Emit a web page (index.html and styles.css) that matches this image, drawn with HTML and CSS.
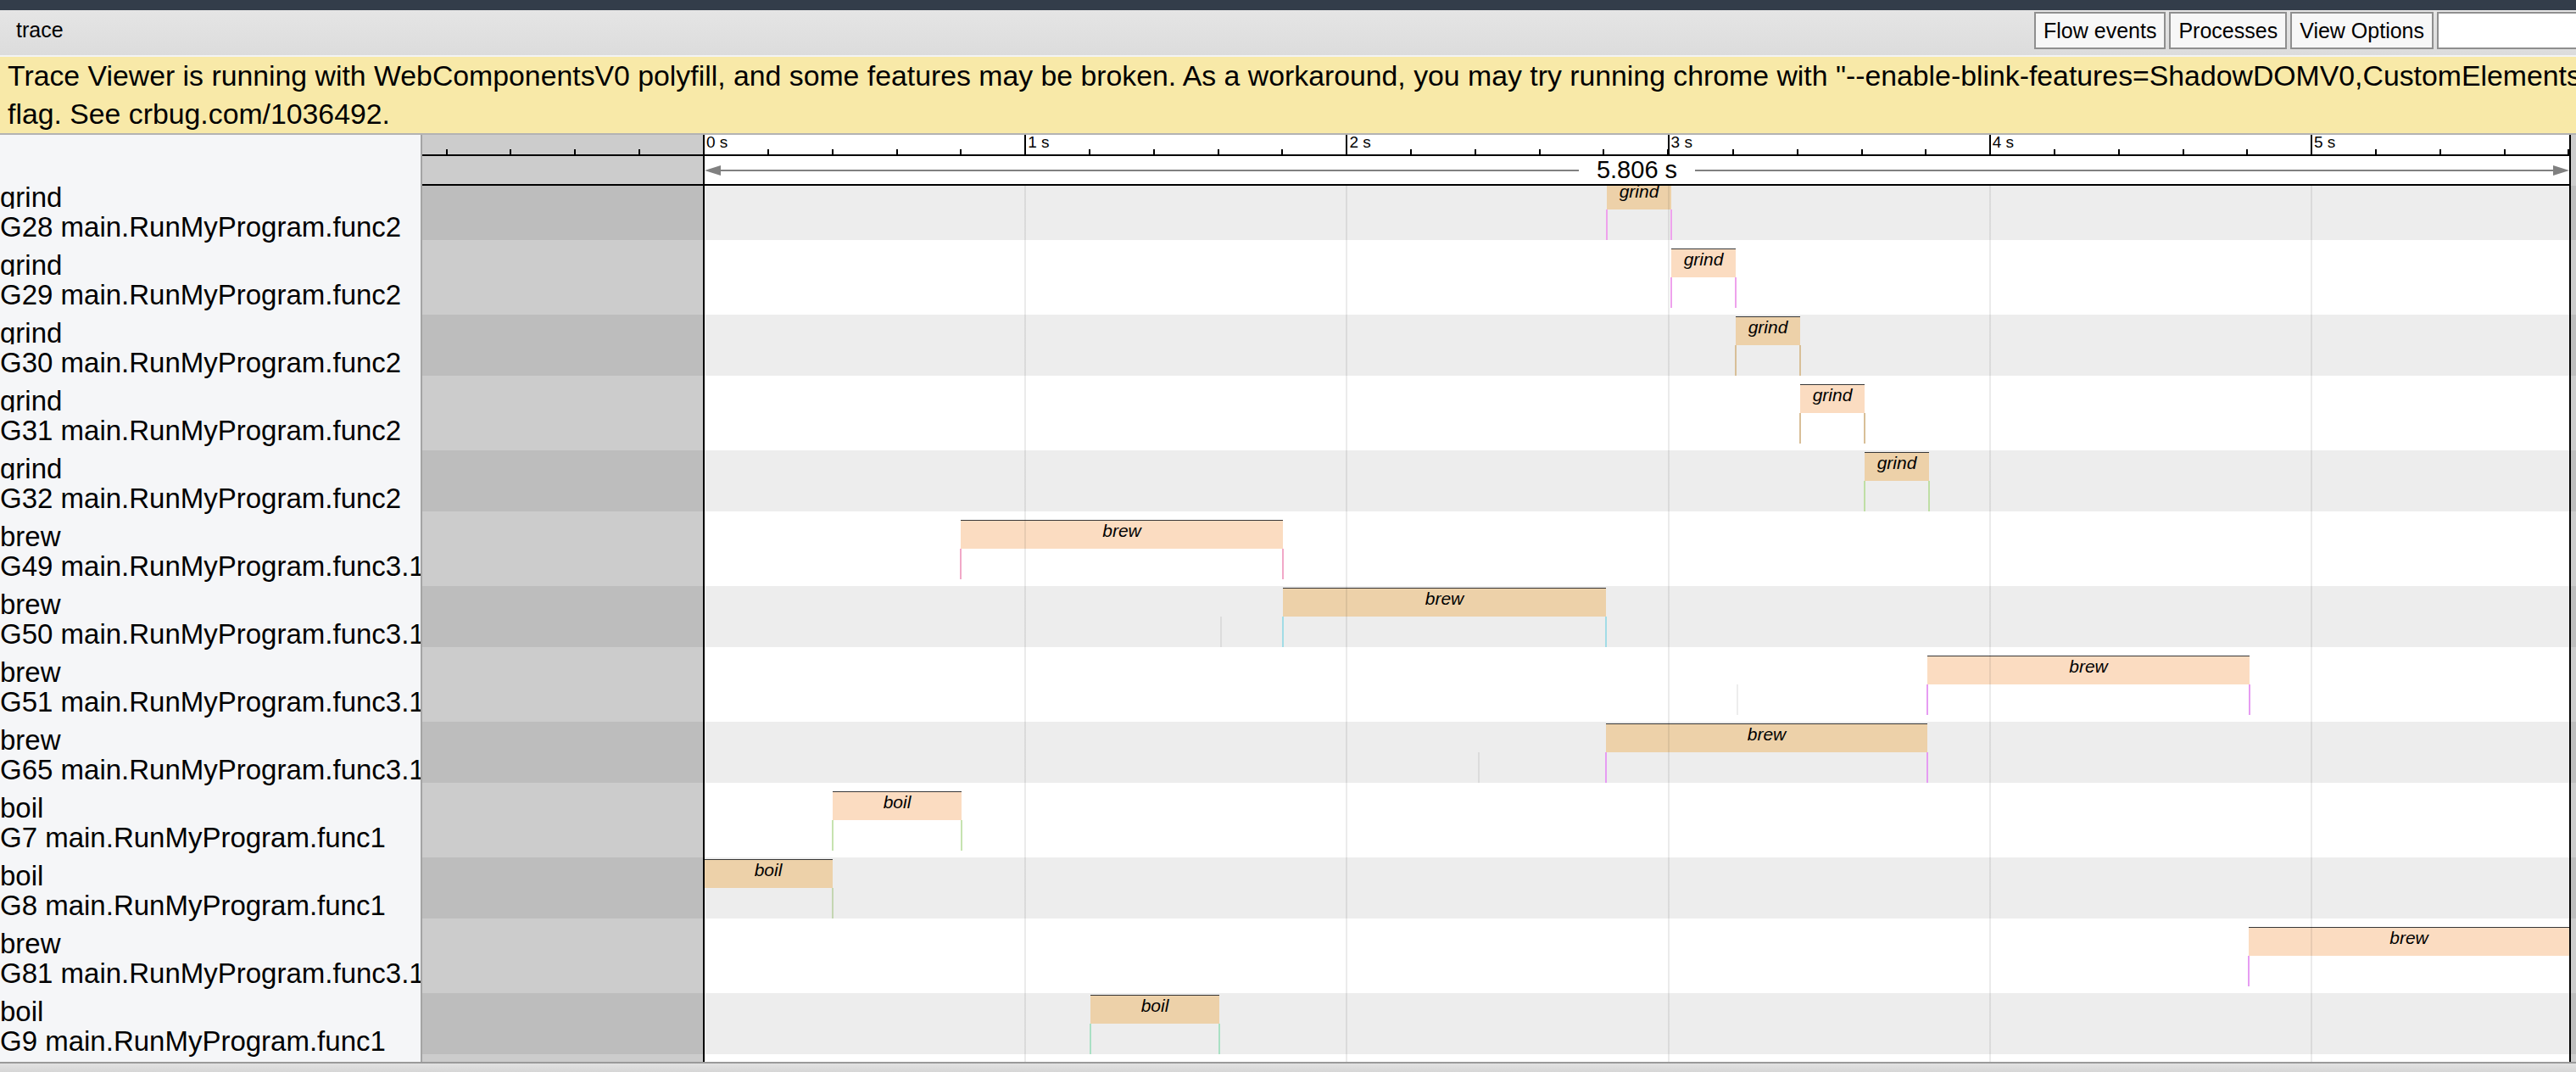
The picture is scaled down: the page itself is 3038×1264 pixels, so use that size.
FILE: index.html
```html
<!DOCTYPE html>
<html>
<head>
<meta charset="utf-8">
<title>trace</title>
<link rel="stylesheet" href="styles.css">
</head>
<body>
<div class="topbar"></div>
<div class="toolbar">
  <div class="title">trace</div>
  <div class="spacer"></div>
  <button class="btn">Flow events</button>
  <button class="btn">Processes</button>
  <button class="btn">View Options</button>
  <input class="search" type="text">
</div>
<div class="banner">Trace Viewer is running with WebComponentsV0 polyfill, and some features may be broken. As a workaround, you may try running chrome with "--enable-blink-features=ShadowDOMV0,CustomElementsV0,HTMLImports"<br>flag. See crbug.com/1036492.</div>
<div class="view">
  <div class="side">
    <div class="side-head"></div>
    <div class="side-rows">
      <div class="rows">
        <div class="label"><div class="label-region">grind</div><div class="label-thread">G28 main.RunMyProgram.func2</div></div>
        <div class="label"><div class="label-region">grind</div><div class="label-thread">G29 main.RunMyProgram.func2</div></div>
        <div class="label"><div class="label-region">grind</div><div class="label-thread">G30 main.RunMyProgram.func2</div></div>
        <div class="label"><div class="label-region">grind</div><div class="label-thread">G31 main.RunMyProgram.func2</div></div>
        <div class="label"><div class="label-region">grind</div><div class="label-thread">G32 main.RunMyProgram.func2</div></div>
        <div class="label"><div class="label-region">brew</div><div class="label-thread">G49 main.RunMyProgram.func3.1</div></div>
        <div class="label"><div class="label-region">brew</div><div class="label-thread">G50 main.RunMyProgram.func3.1</div></div>
        <div class="label"><div class="label-region">brew</div><div class="label-thread">G51 main.RunMyProgram.func3.1</div></div>
        <div class="label"><div class="label-region">brew</div><div class="label-thread">G65 main.RunMyProgram.func3.1</div></div>
        <div class="label"><div class="label-region">boil</div><div class="label-thread">G7 main.RunMyProgram.func1</div></div>
        <div class="label"><div class="label-region">boil</div><div class="label-thread">G8 main.RunMyProgram.func1</div></div>
        <div class="label"><div class="label-region">brew</div><div class="label-thread">G81 main.RunMyProgram.func3.1</div></div>
        <div class="label"><div class="label-region">boil</div><div class="label-thread">G9 main.RunMyProgram.func1</div></div>
      </div>
    </div>
  </div>
  <div class="main">
    <div class="ruler">
      <div class="ruler-neg"></div>
      <div class="ruler-sec">0 s</div>
      <div class="ruler-sec">1 s</div>
      <div class="ruler-sec">2 s</div>
      <div class="ruler-sec">3 s</div>
      <div class="ruler-sec">4 s</div>
      <div class="ruler-sec">5 s</div>
    </div>
    <div class="measure">
      <div class="range">
        <div class="arrow-l"></div>
        <div class="mline"></div>
        <div class="mlabel">5.806 s</div>
        <div class="mline"></div>
        <div class="arrow-r"></div>
      </div>
    </div>
    <div class="tracks">
      <div class="rows">
        <div class="track alt"><div class="lane">
          <div class="slice tan" style="left:1397px;width:76px">grind</div>
          <div class="flow c-pink" style="left:1396px"></div><div class="flow c-pink" style="left:1472px"></div>
        </div></div>
        <div class="track"><div class="lane">
          <div class="slice peach" style="left:1473px;width:76px">grind</div>
          <div class="flow c-pink" style="left:1472px"></div><div class="flow c-pink" style="left:1548px"></div>
        </div></div>
        <div class="track alt"><div class="lane">
          <div class="slice tan" style="left:1549px;width:76px">grind</div>
          <div class="flow c-tan" style="left:1548px"></div><div class="flow c-tan" style="left:1624px"></div>
        </div></div>
        <div class="track"><div class="lane">
          <div class="slice peach" style="left:1625px;width:76px">grind</div>
          <div class="flow c-tan" style="left:1624px"></div><div class="flow c-tan" style="left:1700px"></div>
        </div></div>
        <div class="track alt"><div class="lane">
          <div class="slice tan" style="left:1701px;width:76px">grind</div>
          <div class="flow c-green" style="left:1700px"></div><div class="flow c-green" style="left:1776px"></div>
        </div></div>
        <div class="track"><div class="lane">
          <div class="slice peach" style="left:635px;width:380px">brew</div>
          <div class="flow c-rose" style="left:634px"></div><div class="flow c-rose" style="left:1014px"></div>
        </div></div>
        <div class="track alt"><div class="lane">
          <div class="slice tan" style="left:1015px;width:381px">brew</div>
          <div class="flow c-faint" style="left:941px"></div>
          <div class="flow c-cyan" style="left:1014px"></div><div class="flow c-cyan" style="left:1395px"></div>
        </div></div>
        <div class="track"><div class="lane">
          <div class="slice peach" style="left:1775px;width:380px">brew</div>
          <div class="flow c-faint" style="left:1550px"></div>
          <div class="flow c-violet" style="left:1774px"></div><div class="flow c-violet" style="left:2154px"></div>
        </div></div>
        <div class="track alt"><div class="lane">
          <div class="slice tan" style="left:1396px;width:379px">brew</div>
          <div class="flow c-faint" style="left:1245px"></div>
          <div class="flow c-violet" style="left:1395px"></div><div class="flow c-violet" style="left:1774px"></div>
        </div></div>
        <div class="track"><div class="lane">
          <div class="slice peach" style="left:484px;width:152px">boil</div>
          <div class="flow c-lgreen" style="left:483px"></div><div class="flow c-lgreen" style="left:635px"></div>
        </div></div>
        <div class="track alt"><div class="lane">
          <div class="slice tan" style="left:332px;width:152px">boil</div>
          <div class="flow c-sage" style="left:483px"></div>
        </div></div>
        <div class="track"><div class="lane">
          <div class="slice peach" style="left:2154px;width:378px">brew</div>
          <div class="flow c-violet" style="left:2153px"></div>
        </div></div>
        <div class="track alt"><div class="lane">
          <div class="slice tan" style="left:788px;width:152px">boil</div>
          <div class="flow c-teal" style="left:787px"></div><div class="flow c-teal" style="left:939px"></div>
        </div></div>
      </div>
    </div>
    <div class="grid"></div>
    <div class="oob oob-l"></div>
    <div class="oob oob-r"></div>
    <div class="bound bound-l"></div>
    <div class="bound bound-r"></div>
  </div>
</div>
<div class="bottom"></div>
</body>
</html>
```

FILE: styles.css
```css
* { box-sizing: border-box; }
html, body { margin: 0; padding: 0; }
body {
  width: 3038px;
  height: 1264px;
  overflow: hidden;
  background: #fff;
  color: #000;
  font-family: "Liberation Sans", Arial, Helvetica, sans-serif;
}

.topbar { height: 12px; background: #333d4a; }

.toolbar {
  width: 3052px;
  height: 55px;
  display: flex;
  align-items: flex-start;
  background: linear-gradient(#e5e5e5, #dcdcdc);
  border-bottom: 2px solid #f3f3f3;
}
.title {
  flex: none;
  margin: 11px 0 0 19px;
  font-size: 25px;
  line-height: 25px;
}
.spacer { flex: 1; }
.btn {
  flex: none;
  margin: 2px 0 0 4px;
  height: 44px;
  padding: 0 9px;
  border: 2px solid #8f8f8f;
  border-radius: 0;
  background: #f7f7f7;
  color: #000;
  font-family: "Liberation Sans", Arial, Helvetica, sans-serif;
  font-size: 25px;
  line-height: 40px;
}
.search {
  flex: none;
  margin: 2px 0 0 4px;
  width: 178px;
  height: 44px;
  border: 2px solid #8f8f8f;
  background: #fff;
  padding: 0;
}

.banner {
  height: 92px;
  background: #f8e9a8;
  border-bottom: 2px solid #b3b3b3;
  padding-left: 9px;
  font-size: 33.8px;
  line-height: 45px;
  white-space: nowrap;
  overflow: hidden;
}

.view { display: flex; height: 1093px; }

.side {
  flex: none;
  width: 498px;
  border-right: 2px solid #a4a4a4;
  background: #f5f6f8;
  display: flex;
  flex-direction: column;
}
.side-head { flex: none; height: 60px; }
.side-rows { flex: 1; overflow: hidden; }
.rows { margin-top: -8px; }
.label {
  height: 80px;
  overflow: hidden;
  white-space: nowrap;
  font-size: 33px;
}
.label-region {
  height: 35px;
  overflow: hidden;
  padding-top: 3px;
  line-height: 37px;
}
.label-thread {
  margin-top: 3px;
  line-height: 37px;
  overflow: hidden;
}

.main {
  flex: 1;
  min-width: 0;
  position: relative;
  display: flex;
  flex-direction: column;
  overflow: hidden;
}

.ruler {
  flex: none;
  height: 25px;
  margin-right: 6px;
  border-bottom: 2px solid #000;
  display: flex;
  overflow: hidden;
}
.ruler-neg {
  flex: none;
  width: 331px;
  background-image: repeating-linear-gradient(to left, transparent 0 73.84px, #000 73.84px 75.84px);
  background-size: 100% 6px;
  background-position: left bottom;
  background-repeat: no-repeat;
}
.ruler-sec {
  flex: none;
  width: 379.2px;
  border-left: 2px solid #000;
  padding-left: 2px;
  font-size: 19px;
  line-height: 17px;
  background-image: repeating-linear-gradient(to right, #000 0 2px, transparent 2px 75.84px);
  background-size: 100% 6px;
  background-position: left bottom;
  background-repeat: no-repeat;
  background-origin: border-box;
}

.measure {
  flex: none;
  height: 35px;
  margin-right: 6px;
  border-bottom: 2px solid #000;
  padding-left: 333px;
  display: flex;
  align-items: center;
}
.range {
  width: 2199px;
  display: flex;
  align-items: center;
}
.arrow-l {
  flex: none;
  width: 0;
  height: 0;
  border-top: 6px solid transparent;
  border-bottom: 6px solid transparent;
  border-right: 19px solid #808080;
}
.arrow-r {
  flex: none;
  width: 0;
  height: 0;
  border-top: 6px solid transparent;
  border-bottom: 6px solid transparent;
  border-left: 19px solid #808080;
}
.mline { flex: 1; height: 2px; background: #808080; }
.mlabel {
  flex: none;
  padding: 0 21px;
  background: #fff;
  font-size: 29px;
  line-height: 33px;
}

.tracks { flex: 1; overflow: hidden; }
.track { height: 80px; background: #fff; }
.lane { position: relative; height: 72px; }
.track.alt .lane { background: #ededed; }

.slice {
  position: absolute;
  top: 2px;
  height: 34px;
  border-top: 1px solid #383838;
  font-style: italic;
  font-size: 21px;
  line-height: 24px;
  text-align: center;
  white-space: nowrap;
  overflow: hidden;
}
.slice.tan { background: #edd1a9; }
.slice.peach { background: #fbdcc1; }

.flow { position: absolute; top: 36px; width: 2px; height: 36px; }
.c-pink { background: #eea2ec; }
.c-rose { background: #f1a8c8; }
.c-tan { background: #d8bf98; }
.c-green { background: #bfdfa5; }
.c-cyan { background: #a2dce6; }
.c-violet { background: #e69cf2; }
.c-lgreen { background: #c6e3b0; }
.c-sage { background: #c4d6b2; }
.c-teal { background: #a9e0c4; }
.c-faint { background: rgba(0, 0, 0, 0.07); }

.grid {
  position: absolute;
  top: 60px;
  bottom: 0;
  left: 331px;
  width: 2201px;
  background-image: repeating-linear-gradient(to right, rgba(0, 0, 0, 0.08) 0 2px, transparent 2px 379.2px);
  pointer-events: none;
}
.oob {
  position: absolute;
  top: 0;
  bottom: 0;
  background: rgba(0, 0, 0, 0.2);
  pointer-events: none;
}
.oob-l { left: 0; width: 331px; }
.oob-r { left: 2534px; right: 0; }
.bound {
  position: absolute;
  top: 0;
  bottom: 0;
  width: 2px;
  background: #000;
}
.bound-l { left: 331px; }
.bound-r { left: 2532px; }

.bottom {
  height: 12px;
  border-top: 2px solid #9a9a9a;
  background: linear-gradient(#e2e2e2, #d6d6d6);
}
```
